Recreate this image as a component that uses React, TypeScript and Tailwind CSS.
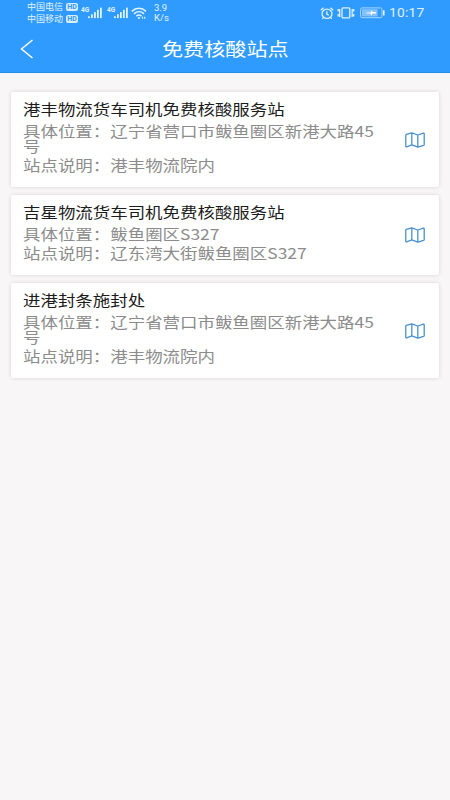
interface Station {
  name: string
  address: string
  note: string
}

const stations: Station[] = [
  {
    name: '港丰物流货车司机免费核酸服务站',
    address: '辽宁省营口市鲅鱼圈区新港大路45号',
    note: '港丰物流院内',
  },
  {
    name: '吉星物流货车司机免费核酸服务站',
    address: '鲅鱼圈区S327',
    note: '辽东湾大街鲅鱼圈区S327',
  },
  {
    name: '进港封条施封处',
    address: '辽宁省营口市鲅鱼圈区新港大路45号',
    note: '港丰物流院内',
  },
]

const Carrier = ({ name }: { name: string }) => (
  <div className="flex h-3 items-center gap-[2px]">
    <span className="w-[37px] whitespace-nowrap text-[9px] leading-3">{name}</span>
    <span className="flex h-2 w-[12px] items-center justify-center rounded-[2px] bg-[#d8edff] font-['Roboto',sans-serif] text-[7px] font-bold leading-none text-[#2f9bff]">
      HD
    </span>
  </div>
)

const Signal = () => (
  <svg width="22" height="14" viewBox="0 0 22 14" fill="currentColor">
    <text x="0" y="5.8" fontSize="6.5" fontWeight="700" fontFamily="Roboto, sans-serif">4G</text>
    <rect x="7" y="10.3" width="1.8" height="1.8" />
    <rect x="10" y="8.3" width="1.8" height="3.8" />
    <rect x="13" y="6.1" width="1.8" height="6" />
    <rect x="16" y="3.8" width="1.8" height="8.3" />
    <rect x="19" y="1.6" width="1.8" height="10.5" />
  </svg>
)

const WifiIcon = () => (
  <svg width="17" height="13" viewBox="0 0 17 13" fill="none" stroke="currentColor" strokeWidth="1.5">
    <path d="M.8 4.4C5 .3 10.8.3 15 4.4M3 6.9c3-2.8 7-2.8 10 0M5.3 9.2c1.7-1.5 3.5-1.5 5.2 0" />
    <circle cx="7.9" cy="11" r="1.1" fill="currentColor" stroke="none" />
    <path d="M11.5 9.8v2M13.7 9.8v2" strokeWidth="1.2" />
  </svg>
)

const AlarmIcon = () => (
  <svg width="14" height="13" viewBox="0 0 14 13" fill="none" stroke="currentColor" strokeWidth="1.3">
    <ellipse cx="7" cy="6.8" rx="5" ry="4.6" />
    <path d="M6.8 4.3v2.8l2 1.2M.8 3.2 3.6.8M13.2 3.2 10.4.8M3.5 10.4l-1.2 1.4M10.5 10.4l1.2 1.4" />
  </svg>
)

const VibrateIcon = () => (
  <svg width="18" height="12" viewBox="0 0 18 12" fill="none" stroke="currentColor" strokeWidth="1.3">
    <rect x="5" y=".9" width="7.8" height="10" rx="1" />
    <path d="M2.7 2v8M1.2 2v2.6M1.2 6.9v2.6M15.2 2v8M16.7 2v2.6M16.7 6.9v2.6" />
  </svg>
)

const BatteryIcon = () => (
  <svg width="25" height="12" viewBox="0 0 25 12" fill="none">
    <rect x="0.6" y=".9" width="21.4" height="9.8" rx="1.5" stroke="#a9d6ff" />
    <rect x="2" y="2.2" width="15.5" height="7.2" fill="#83c2ff" />
    <path d="M6.5 5.5h4.3l.8-2 1.2 1.6H16v1.4h-3.4l-1.2 1.9-1-1.9H6.5z" fill="white" />
    <path d="M23.8 3.2v5.2" stroke="white" strokeWidth="1.4" />
  </svg>
)

const MapIcon = () => (
  <svg
    width="20"
    height="16"
    viewBox="0 0 20 16"
    fill="none"
    stroke="#4990cf"
    strokeWidth="1.3"
    strokeLinejoin="round"
  >
    <path d="M.8 3.3Q.8 2.6 1.4 2.4L6.8.8l6 2.2 5.6-1.9q.8-.2.8.6v10.8q0 .7-.6.9l-5.8 1.7-6-2.3-5.2 2q-.8.2-.8-.6zM6.8.8v12M12.8 3v12" />
  </svg>
)

const StatusBar = () => (
  <div className="flex h-[26px] items-start pl-[27px] text-[#e2f2ff]">
    <div className="w-[51px] pt-px">
      <Carrier name="中国电信" />
      <Carrier name="中国移动" />
    </div>
    <div className="ml-[3px] flex gap-1 pt-[6px]">
      <Signal />
      <Signal />
    </div>
    <div className="ml-[2px] pt-[7px]">
      <WifiIcon />
    </div>
    <div className="ml-[6px] w-[19px] pt-[3px] font-['Roboto',sans-serif] text-[9.5px] leading-[10px]">
      <div>3.9</div>
      <div>K/s</div>
    </div>
    <div className="ml-[147px] pt-[7px]">
      <AlarmIcon />
    </div>
    <div className="ml-[3px] pt-[7px]">
      <VibrateIcon />
    </div>
    <div className="ml-[5px] pt-[7px]">
      <BatteryIcon />
    </div>
    <span className="ml-1 origin-left scale-x-110 pt-[5px] font-['Roboto',sans-serif] text-[12.5px] leading-4 tracking-[0.2px]">
      10:17
    </span>
  </div>
)

const StationCard = ({ station }: { station: Station }) => (
  <div className="flex items-center justify-between rounded-[2px] bg-white pr-[14px] pl-3 shadow-[0_0_4px_rgba(0,0,0,0.14)]">
    <div className="w-[311px] origin-left scale-x-[1.163] pt-2 pb-[15px] text-[15px] leading-[15px]">
      <h2 className="leading-[17px] text-[#1c1c1c]">{station.name}</h2>
      <p className="mt-[6px] text-[#8c8c8c]">具体位置：{station.address}</p>
      <p className="mt-1 text-[#8c8c8c]">站点说明：{station.note}</p>
    </div>
    <MapIcon />
  </div>
)

const App = () => {
  return (
    <div className="flex h-[800px] w-[450px] flex-col overflow-hidden bg-[#f8f6f7] font-['Noto_Sans_CJK_SC',sans-serif] font-normal">
      <header className="h-[73px] border-b border-[#258be9] bg-[#2f9bff]">
        <StatusBar />
        <div className="flex h-[46px] items-center pl-5">
          <svg width="14" height="20" viewBox="0 0 14 20" fill="none" stroke="white" strokeWidth="1.5">
            <path d="M12.5 1 1.5 10l11 9" />
          </svg>
          <h1 className="-mt-[3px] ml-32 origin-left scale-x-[1.172] text-[18px] leading-6 text-white">免费核酸站点</h1>
        </div>
      </header>
      <main className="flex flex-col gap-2 px-[11px] pt-[19px]">
        {stations.map((station) => (
          <StationCard key={station.name} station={station} />
        ))}
      </main>
    </div>
  )
}

export default App
